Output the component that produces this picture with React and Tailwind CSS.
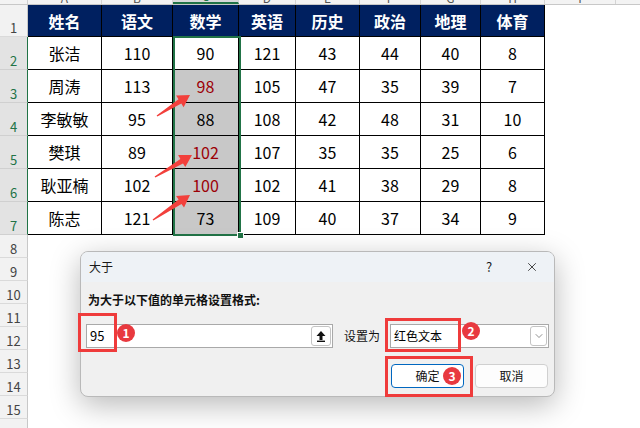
import { X, ChevronDown } from 'lucide-react';

const W = ['w-[74px]', 'w-[71px]', 'w-[66px]', 'w-[57px]', 'w-[64px]', 'w-[61px]', 'w-[60px]', 'w-[64px]'];
const letters = ['A', 'B', 'C', 'D', 'E', 'F', 'G', 'H'];
const header = ['姓名', '语文', '数学', '英语', '历史', '政治', '地理', '体育'];
const rows = [
  ['张洁', 110, 90, 121, 43, 44, 40, 8],
  ['周涛', 113, 98, 105, 47, 35, 39, 7],
  ['李敏敏', 95, 88, 108, 42, 48, 31, 10],
  ['樊琪', 89, 102, 107, 35, 35, 25, 6],
  ['耿亚楠', 102, 100, 102, 41, 38, 29, 8],
  ['陈志', 121, 73, 109, 40, 37, 34, 9],
];
const arrows = [
  [157, 116, 190, 95],
  [155, 177, 192, 155],
  [153, 220, 190, 195],
];

function arrowPoints([x1, y1, x2, y2]) {
  const dx = x2 - x1, dy = y2 - y1;
  const L = Math.hypot(dx, dy);
  const ux = dx / L, uy = dy / L, nx = -uy, ny = ux;
  const se = L - 12;
  const p = (d, w) => `${(x1 + ux * d + nx * w).toFixed(1)},${(y1 + uy * d + ny * w).toFixed(1)}`;
  return [p(0, 0.7), p(se, 2.6), p(se, 7), `${x2},${y2}`, p(se, -7), p(se, -2.6), p(0, -0.7)].join(' ');
}

function RowHead({ n, sel }) {
  return (
    <div
      className={`w-[28px] shrink-0 flex items-end justify-center pb-[2px] text-[13px] leading-none border-r ${
        sel ? 'bg-[#e3e3e3] text-[#217346] border-r-[#217346] border-b border-b-[#d0d0d0]' : 'bg-[#f2f2f2] text-[#444] border-r-[#c8c8c8] border-b border-b-[#dadada]'
      }`}
    >
      {n}
    </div>
  );
}

function Badge({ n, className }) {
  return (
    <div className={`absolute w-[18px] h-[18px] rounded-full bg-[#e8393f] text-white text-[12px] font-bold flex items-center justify-center leading-none ${className}`}>
      {n}
    </div>
  );
}

export default function App() {
  return (
    <div className="relative w-[640px] h-[428px] overflow-hidden bg-white font-['Noto_Sans_CJK_SC',sans-serif] text-black">
      {/* column letters */}
      <div className="flex h-[5px] overflow-hidden bg-[#f3f3f3] border-b border-[#c8c8c8]">
        <div className="w-[28px] shrink-0 border-r border-[#d0d0d0]" />
        {letters.map((l, i) => (
          <div
            key={l}
            className={`${W[i]} shrink-0 border-r border-[#d4d4d4] flex justify-center items-end text-[12px] leading-none ${
              i === 2 ? 'bg-[#d9d9d9] text-[#217346] border-b-2 border-b-[#217346]' : 'text-[#555]'
            }`}
          >
            {l}
          </div>
        ))}
        <div className="w-[71px] shrink-0 border-r border-[#d4d4d4] flex justify-center items-end text-[12px] leading-none text-[#555]">I</div>
        <div className="flex-1" />
      </div>

      {/* header row */}
      <div className="flex h-[32px]">
        <RowHead n={1} />
        {header.map((h, i) => (
          <div key={h} className={`${W[i]} shrink-0 bg-[#002060] border-r border-b border-black flex items-center justify-center text-white font-bold text-[16px]`}>
            {h}
          </div>
        ))}
      </div>

      {/* data rows */}
      {rows.map((r, ri) => (
        <div key={ri} className="flex h-[33px]">
          <RowHead n={ri + 2} sel />
          {r.map((v, i) => (
            <div
              key={i}
              className={`${W[i]} shrink-0 border-r border-b border-black flex items-center justify-center text-[16px] ${
                i === 2 && ri > 0 ? 'bg-[#c8c8c8]' : ''
              } ${i === 2 && v > 95 ? 'text-[#9c0006]' : 'text-black'}`}
            >
              {v}
            </div>
          ))}
        </div>
      ))}

      {/* empty rows */}
      {[8, 9, 10, 11, 12, 13, 14, 15, 16].map((n) => (
        <div key={n} className="flex h-[23px]">
          <RowHead n={n} />
        </div>
      ))}

      {/* selection */}
      <div className="absolute left-[173px] top-[36px] w-[68px] h-[200px] border-2 border-[#217346]" />
      <div className="absolute left-[237px] top-[232px] w-[7px] h-[7px] bg-[#217346] border border-white" />

      {/* arrows */}
      <svg className="absolute left-0 top-0" width="640" height="428">
        {arrows.map((a, i) => (
          <polygon key={i} points={arrowPoints(a)} fill="#f2403c" />
        ))}
      </svg>

      {/* dialog */}
      <div className="absolute left-[80px] top-[251px] w-[475px] h-[146px] rounded-[8px] border border-[#b9b9b9] bg-[#f0f0f0] shadow-[0_8px_30px_rgba(0,0,0,0.28)] overflow-hidden flex flex-col">
        <div className="h-[30px] bg-[#eef2f6] flex items-center pl-[8px] text-[12px] text-[#1a1a1a]">
          <span className="flex-1">大于</span>
          <span className="w-[20px] text-center text-[13px] mr-[26px]">?</span>
          <X className="w-[14px] h-[14px] mr-[15px] text-[#222]" strokeWidth={1.4} />
        </div>
        <div className="flex flex-col px-[5px] pt-[10px]">
          <div className="ml-[2px] h-[16px] text-[12px] font-bold leading-[16px] text-[#111]">为大于以下值的单元格设置格式:</div>
          <div className="flex items-center mt-[16px] h-[24px]">
            <div className="w-[247px] h-[24px] bg-white border border-[#a9a9a9] flex items-center justify-between pl-[3px] pr-[1px]">
              <span className="text-[13px]">95</span>
              <div className="w-[20px] h-[20px] rounded-[3px] border border-[#c4c4c4] bg-white flex items-center justify-center">
                <svg width="10" height="12" viewBox="0 0 10 12">
                  <path d="M5 1 L9.5 6 H6.5 V10 H3.5 V6 H0.5 Z" fill="#111" />
                  <rect x="1" y="10.6" width="8" height="1.4" fill="#111" />
                </svg>
              </div>
            </div>
            <span className="ml-[11px] w-[46px] text-[12px] text-[#111]">设置为</span>
            <div className="w-[159px] h-[24px] bg-white border border-[#a9a9a9] flex items-center justify-between pl-[3px] pr-[1px]">
              <span className="text-[12px]">红色文本</span>
              <div className="w-[17px] h-[20px] rounded-[3px] border border-[#c4c4c4] bg-white flex items-center justify-center">
                <ChevronDown className="w-[12px] h-[12px] text-[#555]" strokeWidth={1.3} />
              </div>
            </div>
          </div>
          <div className="flex justify-end gap-[11px] mt-[16px] pr-[1px]">
            <div className="w-[73px] h-[24px] rounded-[4px] border border-[#0067c0] bg-white flex items-center justify-center text-[12px] text-[#111]">确定</div>
            <div className="w-[73px] h-[24px] rounded-[4px] border border-[#d0d0d0] bg-[#fdfdfd] flex items-center justify-center text-[12px] text-[#111]">取消</div>
          </div>
        </div>
      </div>

      {/* annotations */}
      <div className="absolute left-[78px] top-[313px] w-[39px] h-[39px] border-[3px] border-[#ef3b3b]" />
      <Badge n="1" className="left-[117px] top-[324px]" />
      <div className="absolute left-[385px] top-[318px] w-[76px] h-[34px] border-[3px] border-[#ef3b3b]" />
      <Badge n="2" className="left-[462px] top-[322px]" />
      <div className="absolute left-[385px] top-[356px] w-[88px] h-[41px] border-[3px] border-[#ef3b3b]" />
      <Badge n="3" className="left-[443px] top-[367px]" />
    </div>
  );
}
